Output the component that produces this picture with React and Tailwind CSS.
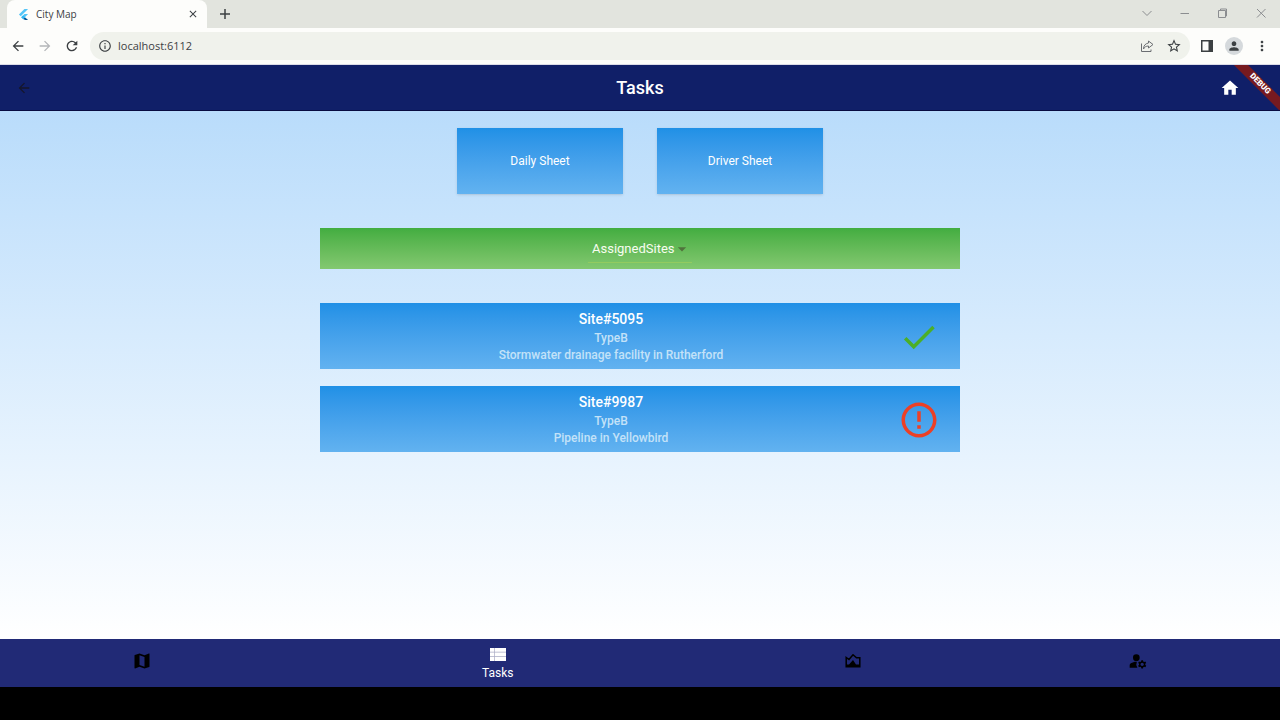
import React from 'react';
import {
  MdArrowBack, MdArrowDropDown, MdArrowForward, MdCheck, MdClose, MdErrorOutline,
  MdHome, MdInfoOutline, MdManageAccounts, MdMap, MdMoreVert, MdPerson, MdRefresh, MdStarOutline,
} from 'react-icons/md';

const sheets = ['Daily Sheet', 'Driver Sheet'];

const sites = [
  { id: 'Site#5095', type: 'TypeB', note: 'Stormwater drainage facility in Rutherford', done: true },
  { id: 'Site#9987', type: 'TypeB', note: 'Pipeline in Yellowbird', done: false },
];

function FlutterLogo() {
  return (
    <svg viewBox="0 0 24 24" className="size-[11px]" aria-hidden="true">
      <path d="M14 0 2 12l4 4L22 0z" fill="#54c5f8" />
      <path d="M14 11 7 18l4 4 4-4 7-7z" fill="#54c5f8" />
      <path d="m11 22 4-4 7 6h-6z" fill="#01579b" />
      <path d="m7 18 4-4 4 4-4 4z" fill="#29b6f6" />
    </svg>
  );
}

function ShareIcon() {
  return (
    <svg viewBox="0 0 14 14" className="size-3.5" fill="none" stroke="currentColor" aria-hidden="true">
      <path d="M1.500 4.500v8h9.500v-2" />
      <path d="M8.500 2 13 5.500l-4.500 3.500V7C6 7 4.500 8 3.500 10c0-3.500 2-5.500 5-6z" strokeLinejoin="round" />
    </svg>
  );
}

function SidePanelIcon() {
  return (
    <svg viewBox="0 0 14 14" className="size-3.5" aria-hidden="true">
      <path d="M1.750 1.750h10.500v10.500H1.750z" fill="none" stroke="currentColor" strokeWidth="1.500" />
      <path d="M8.500 1.500h4v11h-4z" fill="currentColor" />
    </svg>
  );
}

function TaskListIcon() {
  return (
    <svg viewBox="0 0 16 13" className="h-[13px] w-4" aria-hidden="true">
      <path d="M0 0h16v13H0z" fill="#a9abc4" />
      <path d="M0 0h4v3.700H0zM4.700 0H16v3.700H4.700zM0 4.500h4v3.800H0zM4.700 4.500H16v3.800H4.700zM0 9.100h4V13H0zM4.700 9.100H16V13H4.700z" fill="currentColor" />
    </svg>
  );
}

function SiteAreaIcon() {
  return (
    <svg viewBox="0 0 16 14" className="h-3.5 w-4" aria-hidden="true">
      <path d="M1.200 12.800V3.500L4 5.500l4-4.700 3.500 3H14.800v9z" fill="none" stroke="currentColor" strokeWidth="1.500" />
      <path d="M1.200 13v-2.500H4l4-4.500 3 4.500h3.800V13z" fill="currentColor" />
    </svg>
  );
}

function WindowControls() {
  return (
    <div className="ml-auto flex items-center text-[#8b8d90]">
      <button aria-label="Search tabs" className="flex w-[38px] justify-center">
        <svg viewBox="0 0 12 12" className="size-3" fill="none" stroke="currentColor"><path d="m1.500 3 4.500 4.500L10.500 3" /></svg>
      </button>
      <button aria-label="Minimize" className="flex w-[38px] justify-center">
        <svg viewBox="0 0 12 12" className="size-3" fill="none" stroke="currentColor"><path d="M1.500 5.500h8.500" /></svg>
      </button>
      <button aria-label="Restore" className="flex w-[38px] justify-center">
        <svg viewBox="0 0 12 12" className="size-3" fill="none" stroke="currentColor"><path d="M1.500 2.500h7v7h-7zM3.500 2.500v-1.500h6v7h-1.500" /></svg>
      </button>
      <button aria-label="Close" className="flex w-[38px] justify-center">
        <svg viewBox="0 0 12 12" className="size-3" fill="none" stroke="currentColor"><path d="m2 1 8.500 8.500M10.500 1 2 9.500" /></svg>
      </button>
    </div>
  );
}

function BrowserBar() {
  return (
    <div className="bg-[#e2e4de] font-['Open_Sans',sans-serif] text-[#3c4043]">
      <div className="flex h-7 items-center">
        <div className="ml-[7px] flex h-full w-[200px] items-center gap-[7px] rounded-t-lg bg-[#fdfdfb] pr-2 pl-[11px]">
          <FlutterLogo />
          <span className="text-[10px]">City Map</span>
          <button aria-label="Close tab" className="ml-auto"><MdClose className="size-3" /></button>
        </div>
        <button aria-label="New tab" className="ml-[11px]">
          <svg viewBox="0 0 14 14" className="size-3.5" fill="none" stroke="currentColor" strokeWidth="1.500"><path d="M7 2v10M2 7h10" /></svg>
        </button>
        <WindowControls />
      </div>
      <div className="flex h-[37px] items-center border-b border-[#dcdce8] bg-[#fdfdfb] pr-2.5 pl-2.5">
        <div className="flex items-center gap-[11px]">
          <button aria-label="Back"><MdArrowBack className="size-4" /></button>
          <button aria-label="Forward" className="text-[#b4b6b9]"><MdArrowForward className="size-4" /></button>
          <button aria-label="Reload"><MdRefresh className="size-4" /></button>
        </div>
        <div className="ml-2.5 flex h-7 flex-1 items-center rounded-full bg-[#f0f2ec] px-2">
          <MdInfoOutline className="size-3.5" />
          <input aria-label="Address" defaultValue="localhost:6112" className="ml-1.5 min-w-0 flex-1 bg-transparent text-[11px] outline-none" />
          <button aria-label="Share" className="text-[#6b6e72]"><ShareIcon /></button>
          <button aria-label="Bookmark" className="ml-3"><MdStarOutline className="size-4" /></button>
        </div>
        <div className="ml-2.5 flex items-center gap-[11px]">
          <button aria-label="Side panel"><SidePanelIcon /></button>
          <button aria-label="Profile" className="flex size-[18px] items-center justify-center rounded-full bg-[#d5d9dc]"><MdPerson className="size-3.5" /></button>
          <button aria-label="Menu"><MdMoreVert className="size-4" /></button>
        </div>
      </div>
    </div>
  );
}

function AppHeader() {
  return (
    <header className="relative grid h-[46px] grid-cols-3 items-center overflow-hidden border-b border-[#070b40] bg-[#101f68] px-4 text-white">
      <button aria-label="Go back" className="justify-self-start text-[#15162a]"><MdArrowBack className="size-4" /></button>
      <h1 className="text-center text-lg font-medium">Tasks</h1>
      <button aria-label="Home" className="mr-6 justify-self-end"><MdHome className="size-5" /></button>
      <div className="absolute top-3.5 -right-5 w-20 rotate-45 bg-[#761a20] text-center text-[8px] leading-[10px] font-black">DEBUG</div>
    </header>
  );
}

function SiteCard({ site }) {
  return (
    <li className="flex h-[66px] items-center bg-linear-to-b from-[#1f90e6] to-[#62b2f0] pt-px pr-5 pl-1 text-center">
      <div className="flex-1">
        <h2 className="mb-0.5 text-sm leading-[18px] font-medium text-white">{site.id}</h2>
        <p className="text-xs leading-[17px] font-medium text-[#c3e2f8]">{site.type}</p>
        <p className="text-xs leading-[17px] font-medium text-[#c3e2f8]">{site.note}</p>
      </div>
      {site.done
        ? <MdCheck role="img" aria-label="Complete" className="size-[42px] text-[#4caf28]" />
        : <MdErrorOutline role="img" aria-label="Needs attention" className="size-[42px] text-[#ec4026]" />}
    </li>
  );
}

function BottomNav() {
  const idle = 'flex flex-[2] items-center justify-center pb-1 text-black';
  return (
    <nav className="flex h-12 bg-[#212a76]">
      <a href="#map" aria-label="Map" className={idle}><MdMap className="size-5" /></a>
      <a href="#tasks" aria-current="page" className="flex flex-[3] flex-col items-center justify-center gap-1 pt-0.5 text-xs text-white">
        <TaskListIcon />
        <span>Tasks</span>
      </a>
      <a href="#sites" aria-label="Sites" className={idle}><SiteAreaIcon /></a>
      <a href="#account" aria-label="Account" className={idle}><MdManageAccounts className="size-5" /></a>
    </nav>
  );
}

export default function App() {
  return (
    <div className="flex min-h-screen flex-col bg-black font-[Roboto,sans-serif]">
      <BrowserBar />
      <AppHeader />
      <main className="flex flex-1 flex-col items-center bg-linear-to-b from-[#b9dcfb] to-white pt-[17px]">
        <div className="flex gap-[34px]">
          {sheets.map((name) => (
            <button key={name} className="h-[66px] w-[166px] bg-linear-to-b from-[#1f90e6] to-[#62b2f0] text-xs text-white shadow-sm">{name}</button>
          ))}
        </div>
        <div className="mt-[34px] flex h-[41px] w-1/2 justify-center bg-linear-to-b from-[#42ad40] to-[#83c870]">
          <div className="relative mt-2 h-[27px] border-b border-[#93cb60]">
            <select aria-label="Site filter" className="h-full w-[104px] appearance-none bg-transparent pl-1 text-[13px] text-[#f8fdf0] outline-none">
              <option>AssignedSites</option>
            </select>
            <MdArrowDropDown className="pointer-events-none absolute top-[3px] right-0 size-5 text-[#50733c]" />
          </div>
        </div>
        <ul className="mt-[34px] flex w-1/2 flex-col gap-[17px]">
          {sites.map((site) => <SiteCard key={site.id} site={site} />)}
        </ul>
      </main>
      <BottomNav />
      <div className="h-[33px] bg-black" />
    </div>
  );
}
